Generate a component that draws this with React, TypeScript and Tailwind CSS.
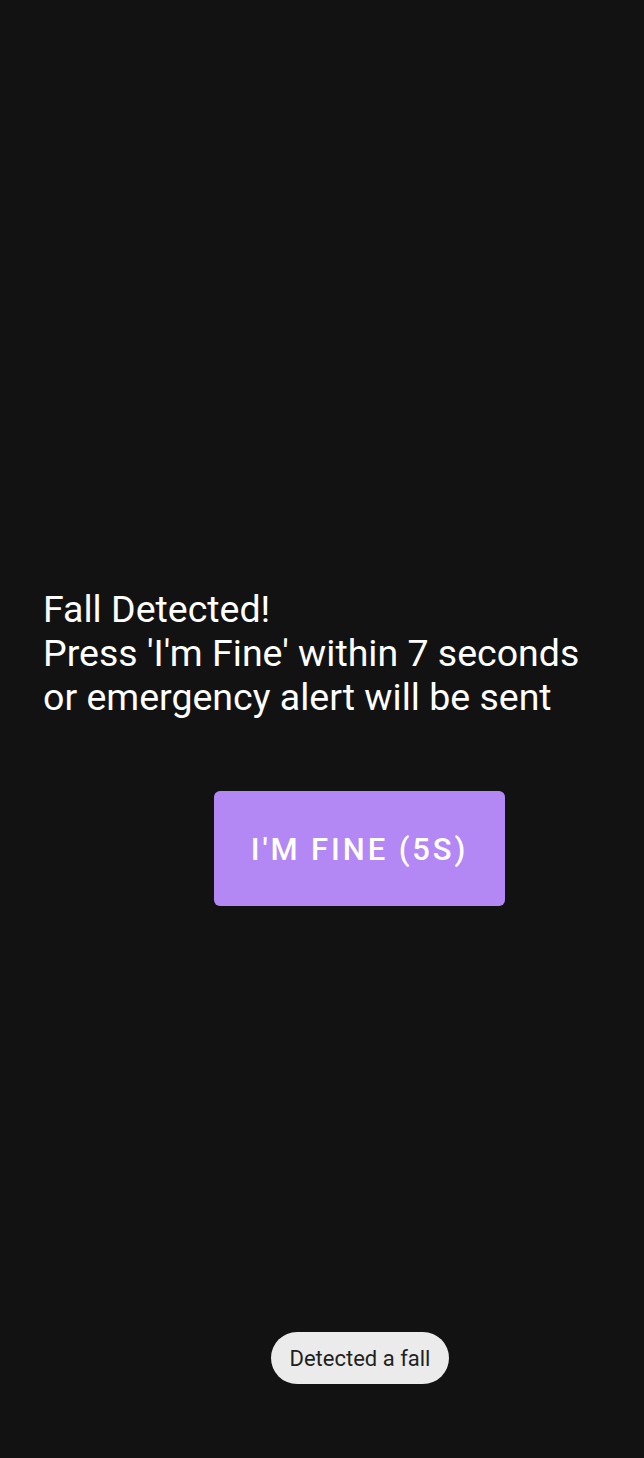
export default function App() {
  return (
    <div
      className="flex h-[1458px] w-[644px] flex-col bg-[#121212]"
      style={{ fontFamily: "Roboto, 'Noto Sans', sans-serif" }}
    >
      <div className="pl-[43px] pt-[587px] text-[37.5px] leading-[44px] text-white">
        <p>Fall Detected!</p>
        <p>Press 'I'm Fine' within 7 seconds</p>
        <p>or emergency alert will be sent</p>
      </div>
      <div className="flex pl-[214px] pt-[72px]">
        <button className="flex h-[115px] w-[291px] items-center justify-center rounded-[6px] bg-[#b388f4] pt-[3px] text-[31px] font-medium tracking-[2.9px] text-white">
          I'M FINE (5S)
        </button>
      </div>
      <div className="flex-1" />
      <div className="flex justify-center pb-[74px] pl-[76px]">
        <div className="flex h-[52px] items-center rounded-full bg-[#ebebeb] px-[19px] text-[22px] text-[#1f1f1f]">
          Detected a fall
        </div>
      </div>
    </div>
  );
}
